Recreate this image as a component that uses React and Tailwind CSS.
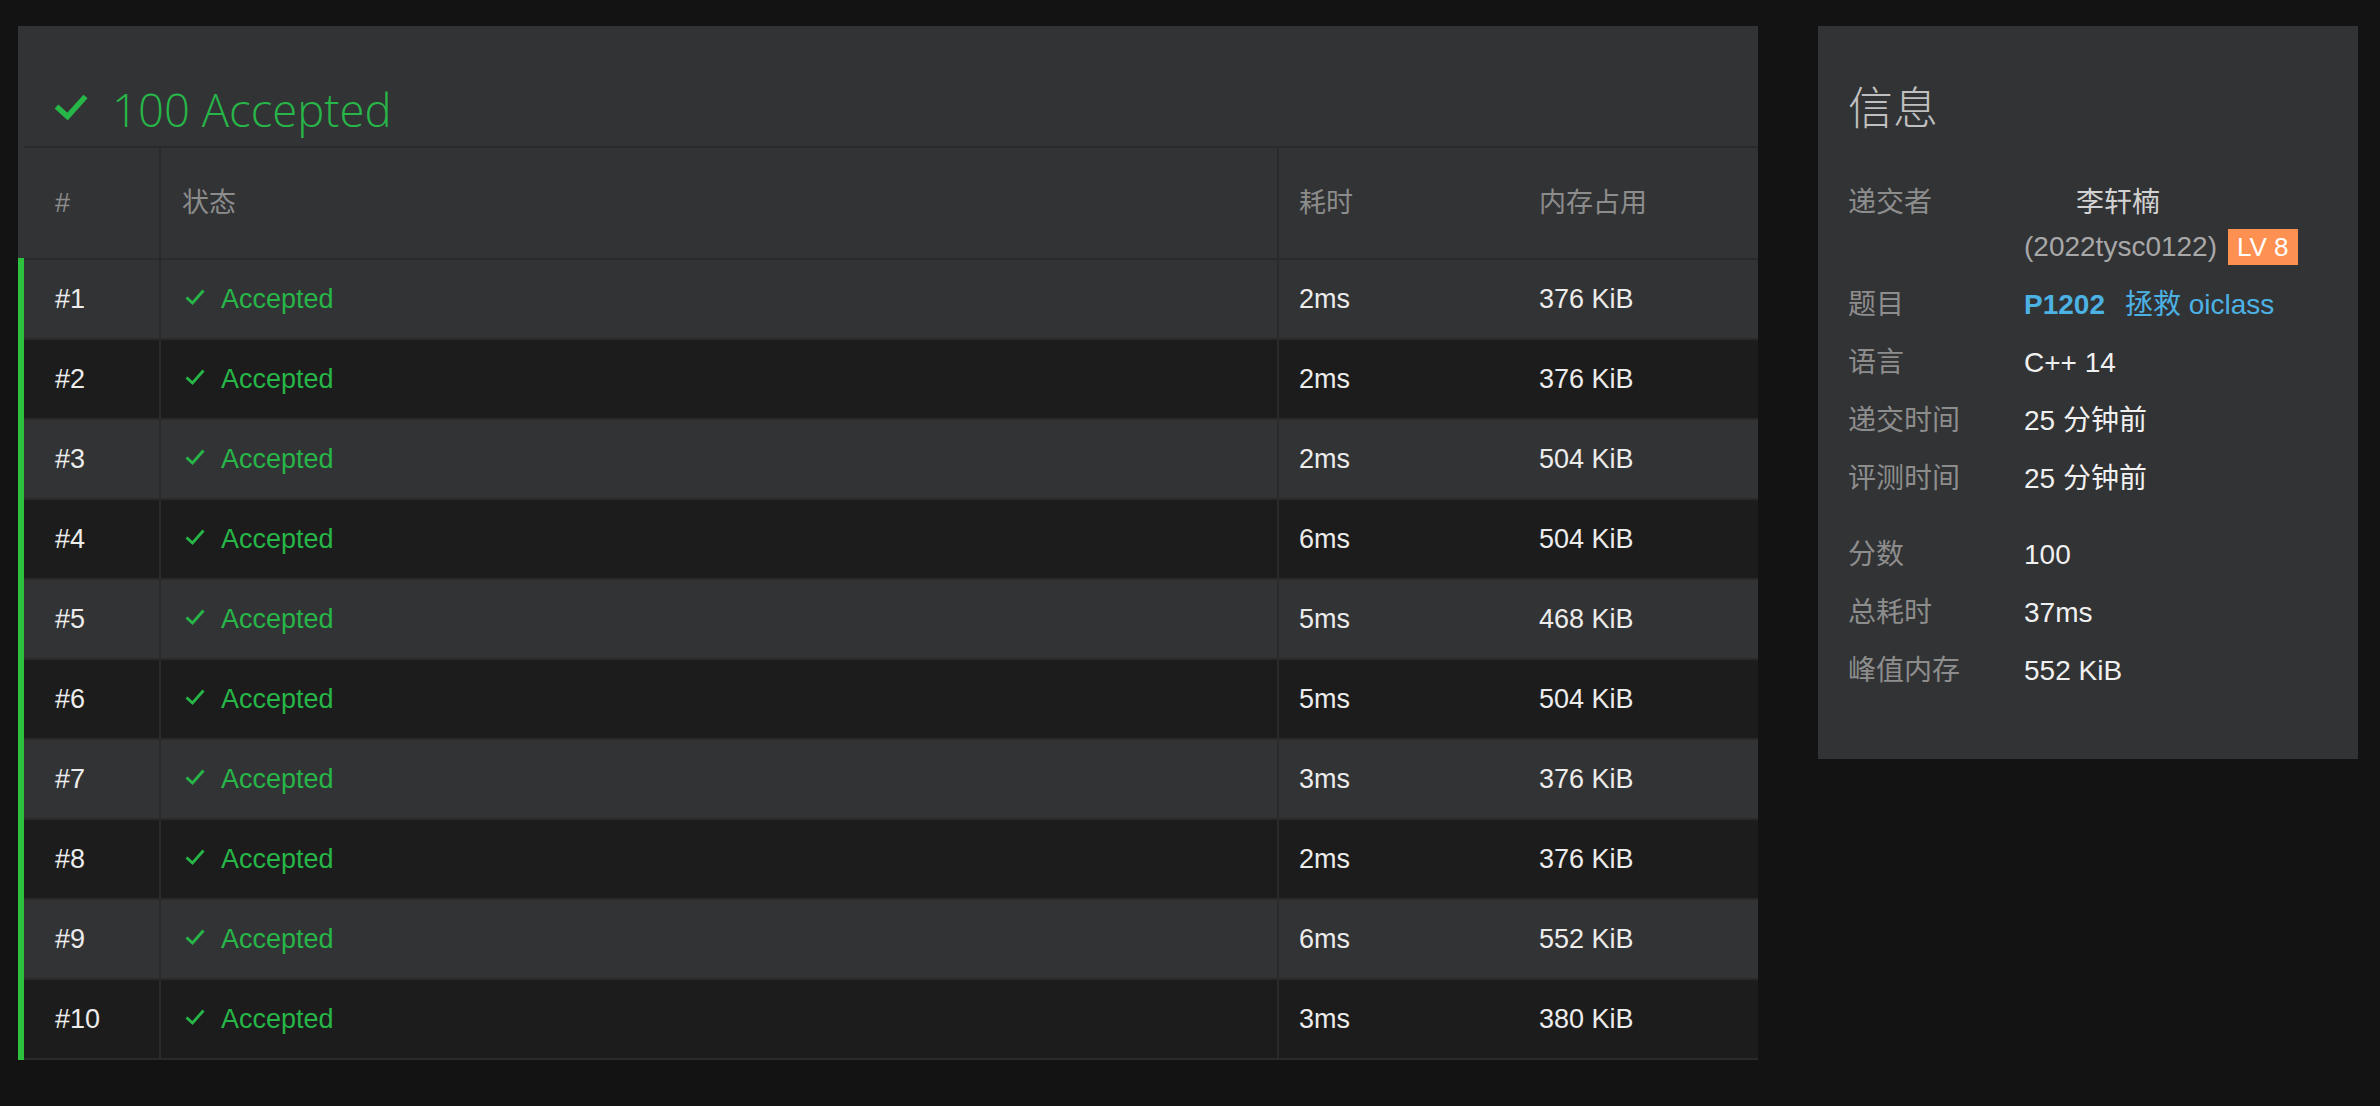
import React from "react";

const rows = [
  ["#1", "2ms", "376 KiB"],
  ["#2", "2ms", "376 KiB"],
  ["#3", "2ms", "504 KiB"],
  ["#4", "6ms", "504 KiB"],
  ["#5", "5ms", "468 KiB"],
  ["#6", "5ms", "504 KiB"],
  ["#7", "3ms", "376 KiB"],
  ["#8", "2ms", "376 KiB"],
  ["#9", "6ms", "552 KiB"],
  ["#10", "3ms", "380 KiB"],
];

function SmallCheck() {
  return (
    <svg width="20" height="16" viewBox="0 0 20 16" fill="none" className="shrink-0 mb-[4px]">
      <polyline points="1.5,8.5 7.5,14 18.5,1.5" stroke="#27b648" strokeWidth="2.8" strokeLinecap="butt" strokeLinejoin="miter" />
    </svg>
  );
}

function BigCheck() {
  return (
    <svg width="34" height="26" viewBox="0 0 34 26" fill="none" className="shrink-0 mb-[4px]">
      <polyline points="2.5,12.5 13.5,22.5 31.5,2.5" stroke="#27b648" strokeWidth="5.5" strokeLinecap="butt" strokeLinejoin="miter" />
    </svg>
  );
}

function InfoRow({ label, children, className = "" }) {
  return (
    <div className={`flex mb-[14px] ${className}`}>
      <div className="w-[176px] shrink-0 text-[#8d8d8d]">{label}</div>
      <div className="text-[#f0f0f0]">{children}</div>
    </div>
  );
}

export default function App() {
  return (
    <div className="min-h-screen w-full bg-[#131313] font-['Liberation_Sans','Noto_Sans_CJK_SC',sans-serif] flex items-start gap-[60px] pl-[18px] pt-[26px]">
      {/* main panel */}
      <div className="w-[1740px] shrink-0 bg-[#323335]">
        <div className="h-[120px] flex items-end pb-[14px] pl-[36px]">
          <div className="flex items-center h-[46px] gap-[24px]">
            <BigCheck />
            <span className="font-['Open_Sans','Roboto',sans-serif] font-light text-[45.5px] leading-[46px] text-[#27b648]">
              100 Accepted
            </span>
          </div>
        </div>

        {/* header row */}
        <div className="flex h-[112px]">
          <div className="w-[6px] shrink-0" />
          <div className="flex-1 flex border-t-2 border-[#2a2a2b] text-[27px] text-[#8c8c8c]">
            <div className="w-[137px] shrink-0 border-r-2 border-[#2a2a2b] flex items-center pl-[31px]">#</div>
            <div className="w-[1118px] shrink-0 border-r-2 border-[#2a2a2b] flex items-center pl-[21px]">状态</div>
            <div className="w-[239px] shrink-0 flex items-center pl-[20px]">耗时</div>
            <div className="flex-1 flex items-center pl-[21px]">内存占用</div>
          </div>
        </div>

        {rows.map((r, i) => {
          const last = i === rows.length - 1;
          const bg = i % 2 === 0 ? "bg-[#323335]" : "bg-[#1c1c1c]";
          return (
            <div key={r[0]} className={`flex ${last ? "h-[82px]" : "h-[80px]"}`}>
              <div className="w-[6px] shrink-0 bg-[#2dc13e]" />
              <div
                className={`flex-1 flex border-t-2 border-[#2a2a2b] text-[27px] text-[#ececec] ${bg} ${
                  last ? "border-b-2" : ""
                }`}
              >
                <div className="w-[137px] shrink-0 border-r-2 border-[#2a2a2b] flex items-center pl-[31px]">{r[0]}</div>
                <div className="w-[1118px] shrink-0 border-r-2 border-[#2a2a2b] flex items-center pl-[24px] gap-[16px] text-[#27b648]">
                  <SmallCheck />
                  <span>Accepted</span>
                </div>
                <div className="w-[239px] shrink-0 flex items-center pl-[20px]">{r[1]}</div>
                <div className="flex-1 flex items-center pl-[21px]">{r[2]}</div>
              </div>
            </div>
          );
        })}
      </div>

      {/* info panel */}
      <div className="w-[540px] shrink-0 bg-[#323335] pl-[30px] pt-[62px] pb-[66px]">
        <div className="text-[45px] leading-[44px] font-light text-[#c0c0c0]">信息</div>
        <div className="mt-[49px] text-[28px] leading-[44px]">
          <InfoRow label="递交者">
            <div className="flex items-center">
              <span className="inline-block w-[52px]" />
              <span className="text-[#d2d2d2]">李轩楠</span>
            </div>
            <div className="flex items-center">
              <span className="text-[#a8a8a8]">(2022tysc0122)</span>
              <span className="ml-[11px] inline-flex items-center h-[36px] px-[9px] bg-[#fe9152] text-white text-[26px] leading-none">
                LV 8
              </span>
            </div>
          </InfoRow>
          <InfoRow label="题目">
            <span className="text-[#4cb2e4] font-bold">P1202</span>
            <span className="ml-[20px] text-[#4cb2e4]">拯救 oiclass</span>
          </InfoRow>
          <InfoRow label="语言">C++ 14</InfoRow>
          <InfoRow label="递交时间">25 分钟前</InfoRow>
          <InfoRow label="评测时间" className="mb-[32px]">25 分钟前</InfoRow>
          <InfoRow label="分数">100</InfoRow>
          <InfoRow label="总耗时">37ms</InfoRow>
          <InfoRow label="峰值内存" className="!mb-0">552 KiB</InfoRow>
        </div>
      </div>
    </div>
  );
}
